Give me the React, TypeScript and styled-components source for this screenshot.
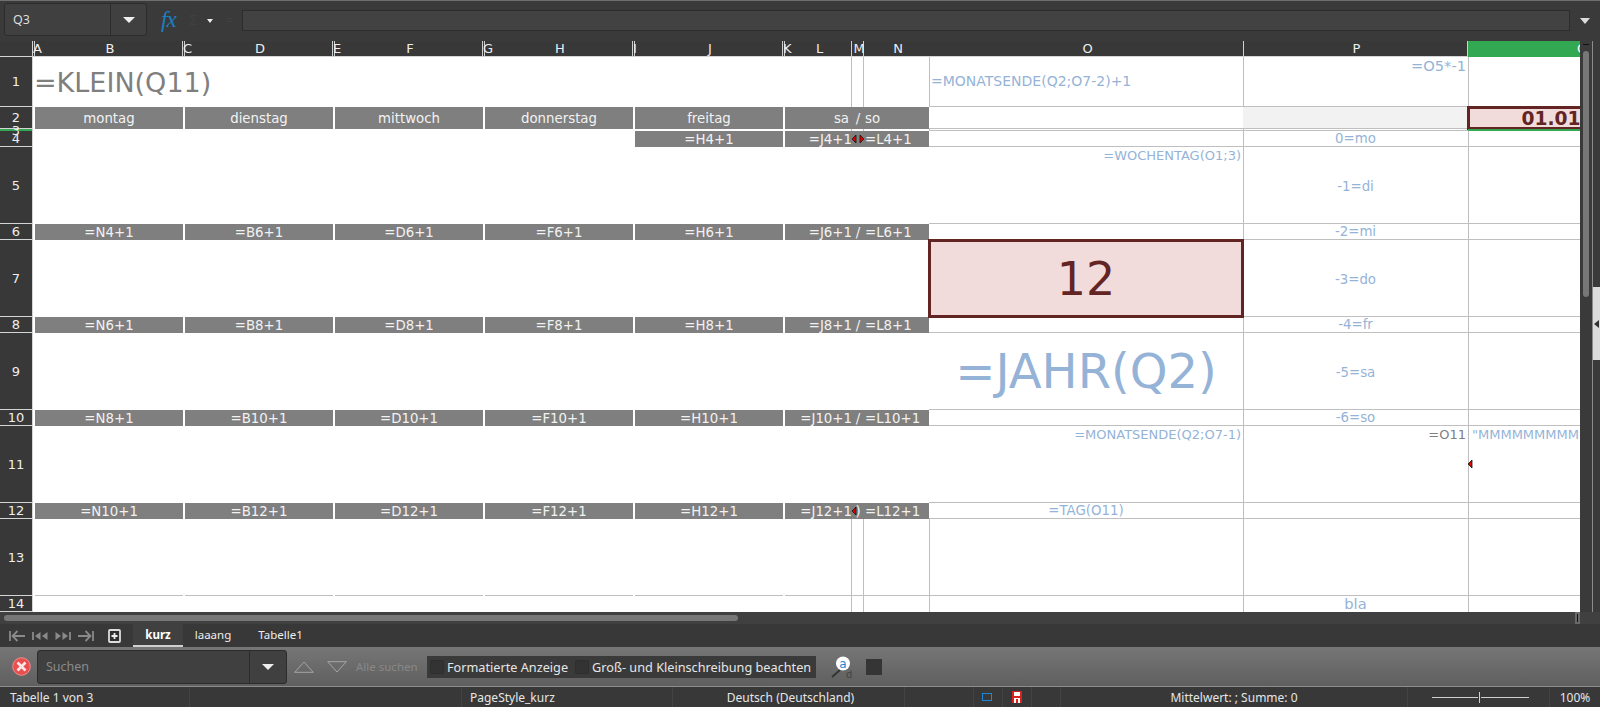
import React from 'react';
import styled, { createGlobalStyle } from 'styled-components';

const COLS = [33, 2, 148, 2, 148, 2, 148, 2, 148, 2, 148, 2, 67, 12, 65, 314, 225, 225];
const ROWS = [16, 50, 22, 2, 16, 77, 16, 77, 16, 77, 16, 77, 16, 77, 16];
const LETTERS = 'ABCDEFGHIJKLMNOPQ'.split('');
const NARROW = 'ACEGIK';

// grid column of a sheet column letter
const colOf = (letter: string) => LETTERS.indexOf(letter) + 2;

const WEEK_COLS = ['B', 'D', 'F', 'H', 'J'];
const WEEK_ROWS: Record<number, string[]> = {
  6: ['=N4+1', '=B6+1', '=D6+1', '=F6+1', '=H6+1'],
  8: ['=N6+1', '=B8+1', '=D8+1', '=F8+1', '=H8+1'],
  10: ['=N8+1', '=B10+1', '=D10+1', '=F10+1', '=H10+1'],
  12: ['=N10+1', '=B12+1', '=D12+1', '=F12+1', '=H12+1'],
};
const DAYS = ['montag', 'dienstag', 'mittwoch', 'donnerstag', 'freitag'];
const WEEKEND: Record<number, string[]> = {
  2: ['sa', '/', 'so'],
  4: ['=J4+1', '', '=L4+1'],
  6: ['=J6+1', '/', '=L6+1'],
  8: ['=J8+1', '/', '=L8+1'],
  10: ['=J10+1', '/', '=L10+1'],
  12: ['=J12+1', ')', '=L12+1'],
};
const OFFSETS: Record<number, string> = {
  4: '0=mo',
  5: '-1=di',
  6: '-2=mi',
  7: '-3=do',
  8: '-4=fr',
  9: '-5=sa',
  10: '-6=so',
};

const GlobalStyle = createGlobalStyle`
  html, body {
    margin: 0;
    height: 100%;
    overflow: hidden;
    background: #383838;
  }
`;

const Window = styled.div`
  width: 1600px;
  height: 707px;
  display: flex;
  flex-direction: column;
  font-family: 'Noto Sans', sans-serif;
  overflow: hidden;
  color: #eee;
`;

const FormulaBar = styled.div`
  height: 41px;
  box-sizing: border-box;
  flex: none;
  display: flex;
  align-items: flex-start;
  border-top: 1px solid #6f6f6f;
  background: #3a3a3a;
  padding: 2px 0 0 4px;
`;

const NameBox = styled.div`
  width: 143px;
  height: 33px;
  box-sizing: border-box;
  flex: none;
  display: flex;
  background: #404040;
  border: 1px solid #2c2c2c;
  border-radius: 3px;
  font-size: 12.5px;
  color: #ddd;
`;

const NameValue = styled.div`
  width: 106px;
  padding-left: 8px;
  box-sizing: border-box;
  line-height: 31px;
  border-right: 1px solid #2c2c2c;
`;

const ComboArrow = styled.div`
  flex: 1;
  display: flex;
  align-items: center;
  justify-content: center;
  &::after {
    content: '';
    border-left: 6px solid transparent;
    border-right: 6px solid transparent;
    border-top: 6px solid #eee;
  }
`;

const FxLabel = styled.div`
  width: 24px;
  margin-left: 14px;
  font: italic 23px 'Liberation Serif', serif;
  color: #1c7fc0;
  line-height: 33px;
  letter-spacing: -1px;
`;

const DimSymbol = styled.div<{ $w: number }>`
  width: ${(p) => p.$w}px;
  color: #404040;
  font-size: 15px;
  line-height: 33px;
  text-align: center;
`;

const SmallArrow = styled.div`
  width: 16px;
  height: 33px;
  display: flex;
  align-items: center;
  justify-content: center;
  &::after {
    content: '';
    margin-top: 3px;
    border-left: 3.5px solid transparent;
    border-right: 3.5px solid transparent;
    border-top: 4px solid #eee;
  }
`;

const FormulaInput = styled.div`
  width: 1328px;
  height: 21px;
  margin: 7px 0 0 1px;
  box-sizing: border-box;
  flex: none;
  background: #424242;
  border: 1px solid #2c2c2c;
`;

const FormulaExpand = styled.div`
  flex: 1;
  height: 33px;
  margin-top: 1px;
  display: flex;
  align-items: center;
  justify-content: center;
  &::after {
    content: '';
    border-left: 5.5px solid transparent;
    border-right: 5.5px solid transparent;
    border-top: 6px solid #ddd;
  }
`;

const SheetRow = styled.div`
  height: 571px;
  flex: none;
  display: flex;
`;

const SheetViewport = styled.div`
  width: 1580px;
  flex: none;
  overflow: hidden;
  background: #fff;
`;

const SheetGrid = styled.div`
  display: grid;
  grid-template-columns: ${COLS.map((c) => `${c}px`).join(' ')};
  grid-template-rows: ${ROWS.map((r) => `${r}px`).join(' ')};
  font-family: 'DejaVu Sans', sans-serif;
  font-size: 13.33px;
`;

const Cell = styled.div<{ $col: number; $row: number; $span?: number }>`
  grid-column: ${(p) => p.$col} / span ${(p) => p.$span ?? 1};
  grid-row: ${(p) => p.$row + 1};
  box-sizing: border-box;
  min-width: 0;
  white-space: nowrap;
  display: flex;
  align-items: center;
  position: relative;
`;

const ColHeader = styled(Cell)<{ $selected?: boolean; $narrow?: boolean; $outer?: boolean }>`
  justify-content: ${(p) => (p.$narrow ? 'flex-start' : 'center')};
  padding-left: ${(p) => (p.$narrow ? 0 : 3)}px;
  background: ${(p) => (p.$selected ? '#33a853' : '#383838')};
  border-right: ${(p) => (p.$outer || p.$selected ? 'none' : '1px solid #cfcfcf')};
  box-shadow: ${(p) => (p.$outer ? '1px 0 0 #cfcfcf' : 'none')};
  border-bottom: 1px solid ${(p) => (p.$selected ? '#33a853' : '#d4d4d4')};
  color: ${(p) => (p.$selected ? '#fff' : '#eee')};
  font-size: 13px;
  overflow: visible;
  z-index: ${(p) => (p.$narrow || p.$outer ? 1 : 0)};
`;

const Corner = styled(Cell)`
  background: #383838;
  border-bottom: 1px solid #d4d4d4;
  border-right: 1px solid #d4d4d4;
`;

const RowHeader = styled(Cell)<{ $cursor?: boolean }>`
  justify-content: center;
  background: ${(p) => (p.$cursor ? '#33a853' : '#383838')};
  border-bottom: ${(p) => (p.$cursor ? 'none' : '1px solid #d4d4d4')};
  border-right: 1px solid #d4d4d4;
  font-size: 13px;
  color: #eee;
  overflow: visible;
  z-index: ${(p) => (p.$cursor ? 2 : 1)};
`;

const GrayCell = styled(Cell)<{ $align?: string; $pad?: number }>`
  background: #7f7f7f;
  color: #f2f2f2;
  justify-content: ${(p) => p.$align ?? 'center'};
  ${(p) => p.$align === 'flex-end' && `padding-right: ${p.$pad ?? 2}px;`}
  ${(p) => p.$align === 'flex-start' && `padding-left: ${p.$pad ?? 2}px;`}
`;

const LineCell = styled(Cell)<{ $noBottom?: boolean; $fill?: string }>`
  box-shadow: 1px 0 0 #bfbfbf;
  border-bottom: ${(p) => (p.$noBottom ? 'none' : '1px solid #bfbfbf')};
  background: ${(p) => p.$fill ?? 'transparent'};
`;

const RuleCell = styled(Cell)<{ $noBottom?: boolean }>`
  border-right: 1px solid #bfbfbf;
  border-bottom: ${(p) => (p.$noBottom ? 'none' : '1px solid #bfbfbf')};
`;

const FloorCell = styled(Cell)`
  border-bottom: 1px solid #bfbfbf;
`;

const BlueText = styled.span<{ $size?: number; $top?: number; $side?: string; $drop?: number; $indent?: number }>`
  color: #95b3d7;
  font-size: ${(p) => p.$size ?? 13.33}px;
  line-height: 1;
  ${(p) => p.$top !== undefined && `align-self: flex-start; margin-top: ${p.$top}px;`}
  ${(p) => p.$side === 'left' && `margin-right: auto; padding-left: ${p.$indent ?? 2}px;`}
  ${(p) => p.$side === 'right' && 'margin-left: auto; padding-right: 2px;'}
  ${(p) => p.$side === 'center' && 'margin-left: auto; margin-right: auto;'}
  ${(p) => p.$drop && `position: relative; top: ${p.$drop}px;`}
`;

const GrayText = styled(BlueText)`
  color: #7f7f7f;
`;

const Headline = styled.span`
  font-size: 27px;
  color: #7f7f7f;
  padding-left: 1px;
`;

const HighlightCell = styled(Cell)<{ $size: number; $weight?: number }>`
  background: #f2dcdb;
  color: #632523;
  justify-content: center;
  font-size: ${(p) => p.$size}px;
  font-weight: ${(p) => p.$weight ?? 400};
  outline: 3px solid #632523;
  outline-offset: -2px;
  z-index: 2;
`;

const CursorStrip = styled(Cell)`
  background: #33a853;
  z-index: 3;
`;

const OverflowMark = styled.svg<{ $left: number }>`
  position: absolute;
  left: ${(p) => p.$left}px;
  top: 50%;
  margin-top: -4px;
  width: 5px;
  height: 8px;
`;

const HScrollRow = styled.div`
  height: 12px;
  flex: none;
  display: flex;
  background: #404040;
  position: relative;
`;

const HThumb = styled.div`
  width: 734px;
  height: 6px;
  margin: 3px 0 0 4px;
  border-radius: 3px;
  background: #777;
`;

const HScrollEnd = styled.div`
  position: absolute;
  left: 1575px;
  top: 0;
  width: 5px;
  height: 12px;
  background: #6a6a6a;
  display: flex;
  align-items: center;
  justify-content: center;
  &::after {
    content: '';
    width: 1px;
    height: 8px;
    background: #111;
  }
`;

const VScroll = styled.div`
  width: 12px;
  flex: none;
  background: #3a3a3a;
  position: relative;
`;

const VNotch = styled.div`
  height: 1px;
  width: 6px;
  margin: 0 auto;
  position: relative;
  top: 3px;
  background: #111;
`;

const VThumb = styled.div`
  width: 6px;
  height: 246px;
  margin: 9px auto 0;
  border-radius: 3px;
  background: #777;
`;

const Sidebar = styled.div`
  flex: 1;
  border-left: 1px solid #8c8c8c;
  background: #3a3a3a;
  padding-top: 246px;
`;

const SidebarHandle = styled.div`
  width: 7px;
  height: 73px;
  background: #dcdcdc;
  display: flex;
  align-items: center;
  justify-content: center;
  &::after {
    content: '';
    border-top: 4px solid transparent;
    border-bottom: 4px solid transparent;
    border-right: 5px solid #333;
  }
`;

const TabBar = styled.div`
  height: 23px;
  flex: none;
  display: flex;
  align-items: stretch;
  background: #383838;
  font-size: 11.5px;
`;

const NavGroup = styled.div`
  width: 133px;
  display: flex;
  align-items: center;
  padding-left: 9px;
  box-sizing: border-box;
  gap: 7px;
`;

const Tab = styled.div<{ $active?: boolean; $w: number }>`
  width: ${(p) => p.$w}px;
  box-sizing: border-box;
  text-align: center;
  line-height: 21px;
  font-weight: ${(p) => (p.$active ? 700 : 400)};
  background: ${(p) => (p.$active ? '#404040' : 'transparent')};
  border-bottom: 2px solid ${(p) => (p.$active ? '#cfcfcf' : 'transparent')};
  color: ${(p) => (p.$active ? '#fff' : '#eee')};
`;

const FindBar = styled.div`
  height: 39px;
  flex: none;
  box-sizing: border-box;
  display: flex;
  align-items: center;
  padding-left: 12px;
  background: linear-gradient(#767676, #5f5f5f);
`;

const CloseBadge = styled.svg`
  width: 19px;
  height: 19px;
  flex: none;
`;

const SearchCombo = styled.div`
  width: 250px;
  height: 34px;
  margin-left: 6px;
  box-sizing: border-box;
  flex: none;
  display: flex;
  background: #404040;
  border: 1px solid #2c2c2c;
  border-radius: 3px;
  font-size: 12.5px;
  color: #8a8a8a;
`;

const SearchValue = styled.div`
  width: 212px;
  box-sizing: border-box;
  padding-left: 8px;
  line-height: 32px;
  border-right: 1px solid #2c2c2c;
`;

const FindArrow = styled.svg<{ $gap: number }>`
  width: 20px;
  height: 12px;
  flex: none;
  margin-left: ${(p) => p.$gap}px;
`;

const FindAll = styled.div`
  width: 62px;
  margin-left: 9px;
  font-size: 11.5px;
  color: #888;
  white-space: nowrap;
`;

const OptionGroup = styled.div`
  width: 389px;
  height: 22px;
  margin-left: 9px;
  box-sizing: border-box;
  flex: none;
  display: flex;
  align-items: center;
  padding-left: 3px;
  background: #3a3a3a;
  font-size: 12.7px;
  color: #e6e6e6;
  white-space: nowrap;
`;

const CheckBox = styled.div<{ $gap?: number }>`
  width: 14px;
  height: 14px;
  flex: none;
  margin-left: ${(p) => p.$gap ?? 0}px;
  margin-right: 3px;
  box-sizing: border-box;
  border: 1px solid #2e2e2e;
  border-radius: 2px;
  background: #333;
`;

const FindIcon = styled.svg`
  width: 22px;
  height: 22px;
  margin-left: 15px;
  flex: none;
`;

const SquareButton = styled.div`
  width: 16px;
  height: 16px;
  margin-left: 13px;
  flex: none;
  background: #353535;
`;

const StatusBar = styled.div`
  flex: 1;
  box-sizing: border-box;
  display: grid;
  grid-template-columns: 190px 272px 211px 232px 69px 29px 29px 29px 347px 142px 50px;
  border-top: 1px solid #8c8c8c;
  background: #383838;
  font-size: 12px;
  color: #e6e6e6;
`;

const StatusCell = styled.div<{ $center?: boolean; $pad?: number }>`
  display: flex;
  align-items: center;
  justify-content: ${(p) => (p.$center ? 'center' : 'flex-start')};
  padding-left: ${(p) => p.$pad ?? 0}px;
  box-sizing: border-box;
  border-right: 1px solid #434343;
  white-space: nowrap;
  &:last-child {
    border-right: none;
  }
`;

const ZoomTrack = styled.div`
  width: 97px;
  height: 1px;
  margin-left: 3px;
  background: #d0d0d0;
  position: relative;
  &::after {
    content: '';
    position: absolute;
    left: 47px;
    top: -5px;
    width: 1px;
    height: 11px;
    background: #d0d0d0;
    box-shadow: 0 0 0 1px #383838;
  }
`;

const Mark = ({ left }: { left: number }) => (
  <OverflowMark $left={left} viewBox="0 0 5 8">
    <polygon points="4,0 0,4 4,8" fill="#e00000" stroke="#111" strokeWidth="0.8" />
  </OverflowMark>
);

const NavIcon = ({ kind }: { kind: 'first' | 'prev' | 'next' | 'last' }) => {
  const flip = kind === 'next' || kind === 'last' ? 'matrix(-1 0 0 1 16 0)' : undefined;
  return (
    <svg width="16" height="12" viewBox="0 0 16 12">
      <g transform={flip} fill="none" stroke="#8a8a8a" strokeWidth="1.8">
        {kind === 'first' || kind === 'last' ? (
          <>
            <path d="M1 1v10" />
            <path d="M8.5 1 3.5 6l5 5M3.5 6H16" />
          </>
        ) : (
          <>
            <path d="M1 2v8" />
            <path d="M8.5 2 3 6l5.5 4zM15.5 2 10 6l5.5 4z" fill="#8a8a8a" stroke="none" />
          </>
        )}
      </g>
    </svg>
  );
};

const buildCells = () => {
  const cells: React.ReactNode[] = [];

  cells.push(<Corner key="corner" $col={1} $row={0} />);
  LETTERS.forEach((letter) => {
    cells.push(
      <ColHeader
        key={`h${letter}`}
        $col={colOf(letter)}
        $row={0}
        $selected={letter === 'Q'}
        $narrow={NARROW.includes(letter)}
        $outer={letter === 'N' || letter === 'O'}
      >
        {letter}
      </ColHeader>,
    );
  });

  for (let r = 1; r <= 14; r++) {
    cells.push(
      <RowHeader key={`r${r}`} $col={1} $row={r} $cursor={r === 3}>
        {r}
      </RowHeader>,
    );
  }

  // gridlines of the right part of the sheet
  for (let r = 1; r <= 14; r++) {
    ['O', 'P', 'Q'].forEach((c) => {
      cells.push(
        <LineCell
          key={`l${c}${r}`}
          $col={colOf(c)}
          $row={r}
          $noBottom={r === 14}
          $fill={c === 'P' && r === 2 ? '#f2f2f2' : undefined}
        >
          {c === 'O' && r === 1 && (
            <BlueText $side="left" $size={14} $drop={-1}>
              =MONATSENDE(Q2;O7-2)+1
            </BlueText>
          )}
          {c === 'O' && r === 5 && (
            <BlueText $side="right" $top={2} $size={13}>
              =WOCHENTAG(O1;3)
            </BlueText>
          )}
          {c === 'O' && r === 9 && (
            <BlueText $side="center" $size={48}>
              =JAHR(Q2)
            </BlueText>
          )}
          {c === 'O' && r === 11 && (
            <BlueText $side="right" $top={2} $size={13}>
              =MONATSENDE(Q2;O7-1)
            </BlueText>
          )}
          {c === 'O' && r === 12 && <BlueText $side="center">=TAG(O11)</BlueText>}
          {c === 'P' && r === 1 && (
            <BlueText $side="right" $top={2} $size={14.67}>
              =O5*-1
            </BlueText>
          )}
          {c === 'P' && OFFSETS[r] && (
            <BlueText $side="center" $drop={ROWS[r] > 20 ? 2 : 0}>
              {OFFSETS[r]}
            </BlueText>
          )}
          {c === 'P' && r === 11 && (
            <GrayText $side="right" $top={2} $size={13}>
              =O11
            </GrayText>
          )}
          {c === 'P' && r === 14 && (
            <BlueText $side="center" $size={14.67}>
              bla
            </BlueText>
          )}
          {c === 'Q' && r === 11 && (
            <>
              <BlueText $side="left" $top={2} $size={13} $indent={4}>
                "MMMMMMMMMMMMMMMM
              </BlueText>
              <Mark left={0} />
            </>
          )}
        </LineCell>,
      );
    });
  }

  // thin column rules beside the merged weekend cells
  [1, 3, 13, 14].forEach((r) => {
    ['L', 'M'].forEach((c) => {
      cells.push(<RuleCell key={`m${c}${r}`} $col={colOf(c)} $row={r} $noBottom={r !== 13} />);
    });
    cells.push(<LineCell key={`mN${r}`} $col={colOf('N')} $row={r} $noBottom={r !== 13} />);
  });

  ['B', 'D', 'F', 'H', 'J'].forEach((c) => {
    cells.push(<FloorCell key={`f${c}`} $col={colOf(c)} $row={13} />);
  });

  DAYS.forEach((day, i) => {
    cells.push(
      <GrayCell key={day} $col={colOf(WEEK_COLS[i])} $row={2}>
        {day}
      </GrayCell>,
    );
  });
  cells.push(
    <GrayCell key="j4" $col={colOf('J')} $row={4}>
      =H4+1
    </GrayCell>,
  );

  Object.entries(WEEK_ROWS).forEach(([row, texts]) => {
    texts.forEach((text, i) => {
      cells.push(
        <GrayCell key={`${row}-${i}`} $col={colOf(WEEK_COLS[i])} $row={Number(row)}>
          {text}
        </GrayCell>,
      );
    });
  });

  Object.entries(WEEKEND).forEach(([row, [l, m, n]]) => {
    const r = Number(row);
    cells.push(
      <GrayCell key={`L${r}`} $col={colOf('L')} $row={r} $align="flex-end" $pad={r === 2 ? 3 : 0}>
        {l}
      </GrayCell>,
      <GrayCell key={`M${r}`} $col={colOf('M')} $row={r}>
        {m}
        {r === 4 && (
          <>
            <Mark left={0} />
            <OverflowMark $left={7} viewBox="0 0 5 8">
              <polygon points="1,0 5,4 1,8" fill="#e00000" stroke="#111" strokeWidth="0.8" />
            </OverflowMark>
          </>
        )}
        {r === 12 && <Mark left={0} />}
      </GrayCell>,
      <GrayCell key={`N${r}`} $col={colOf('N')} $row={r} $align="flex-start" $pad={1}>
        {n}
      </GrayCell>,
    );
  });

  cells.push(
    <Cell key="title" $col={colOf('A')} $row={1} $span={3}>
      <Headline>=KLEIN(Q11)</Headline>
    </Cell>,
    <HighlightCell key="o7" $col={colOf('O')} $row={7} $size={46}>
      12
    </HighlightCell>,
    <HighlightCell key="q2" $col={colOf('Q')} $row={2} $size={18.67} $weight={700}>
      01.01.2021
    </HighlightCell>,
    <CursorStrip key="q3" $col={colOf('Q')} $row={3} />,
  );

  return cells;
};

const App = () => (
  <Window>
    <GlobalStyle />
    <FormulaBar>
      <NameBox>
        <NameValue>Q3</NameValue>
        <ComboArrow />
      </NameBox>
      <FxLabel>fx</FxLabel>
      <DimSymbol $w={17}>Σ</DimSymbol>
      <SmallArrow />
      <DimSymbol $w={23}>=</DimSymbol>
      <FormulaInput />
      <FormulaExpand />
    </FormulaBar>

    <SheetRow>
      <SheetViewport>
        <SheetGrid>{buildCells()}</SheetGrid>
      </SheetViewport>
      <VScroll>
        <VNotch />
        <VThumb />
      </VScroll>
      <Sidebar>
        <SidebarHandle />
      </Sidebar>
    </SheetRow>

    <HScrollRow>
      <HThumb />
      <HScrollEnd />
    </HScrollRow>

    <TabBar>
      <NavGroup>
        <NavIcon kind="first" />
        <NavIcon kind="prev" />
        <NavIcon kind="next" />
        <NavIcon kind="last" />
        <svg width="13" height="14" viewBox="0 0 13 14" style={{ marginLeft: 7 }}>
          <rect x="1" y="1" width="11" height="12" rx="1" fill="#2f2f2f" stroke="#ddd" strokeWidth="1.8" />
          <path d="M6.5 4v6M3.5 7h6" stroke="#eee" strokeWidth="1.8" />
        </svg>
      </NavGroup>
      <Tab $active $w={50}>
        kurz
      </Tab>
      <Tab $w={60}>laaang</Tab>
      <Tab $w={75}>Tabelle1</Tab>
    </TabBar>

    <FindBar>
      <CloseBadge viewBox="0 0 19 19">
        <circle cx="9.5" cy="9.5" r="8.8" fill="#ea4f4f" stroke="#f28c8c" strokeWidth="1" />
        <path d="M5.5 5.5l8 8M13.5 5.5l-8 8" stroke="#fbe6e6" strokeWidth="2.6" />
      </CloseBadge>
      <SearchCombo>
        <SearchValue>Suchen</SearchValue>
        <ComboArrow />
      </SearchCombo>
      <FindArrow $gap={7} viewBox="0 0 20 12">
        <path d="M.7 11.3 10 1l9.3 10.3z" fill="none" stroke="#a5a5a5" />
      </FindArrow>
      <FindArrow $gap={13} viewBox="0 0 20 12">
        <path d="M.7.7 10 11 19.3.7z" fill="none" stroke="#a5a5a5" />
      </FindArrow>
      <FindAll>Alle suchen</FindAll>
      <OptionGroup>
        <CheckBox />
        Formatierte Anzeige
        <CheckBox $gap={7} />
        Groß- und Kleinschreibung beachten
      </OptionGroup>
      <FindIcon viewBox="0 0 22 22">
        <path d="M1 21l8-7" stroke="#333" strokeWidth="1.8" />
        <circle cx="12" cy="7.5" r="7" fill="#fff" />
        <text x="12" y="11.5" textAnchor="middle" fontSize="12" fontFamily="'DejaVu Sans', sans-serif" fill="#1b87d6">
          a
        </text>
        <text x="15" y="21.5" fontSize="10" fontFamily="'DejaVu Sans', sans-serif" fill="#444">
          d
        </text>
      </FindIcon>
      <SquareButton />
    </FindBar>

    <StatusBar>
      <StatusCell $pad={10}>Tabelle 1 von 3</StatusCell>
      <StatusCell />
      <StatusCell $pad={8}>PageStyle_kurz</StatusCell>
      <StatusCell $center $pad={4}>
        Deutsch (Deutschland)
      </StatusCell>
      <StatusCell />
      <StatusCell $center>
        <svg width="10" height="8" viewBox="0 0 10 8" style={{ marginRight: 3 }}>
          <rect x=".5" y=".5" width="9" height="7" fill="none" stroke="#1b87d6" />
        </svg>
      </StatusCell>
      <StatusCell $center>
        <svg width="10" height="12" viewBox="0 0 10 12">
          <rect width="10" height="12" fill="#d92020" />
          <rect x="2" y="1" width="6" height="4" fill="#fff" />
          <rect x="2" y="7" width="6" height="5" fill="#fff" />
          <rect x="4" y="8" width="2" height="4" fill="#d92020" />
        </svg>
      </StatusCell>
      <StatusCell />
      <StatusCell $center>Mittelwert: ; Summe: 0</StatusCell>
      <StatusCell $center>
        <ZoomTrack />
      </StatusCell>
      <StatusCell $center>100%</StatusCell>
    </StatusBar>
  </Window>
);

export default App;
